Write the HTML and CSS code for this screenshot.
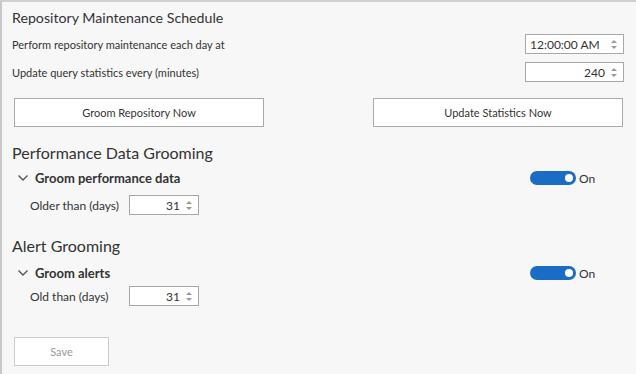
FILE: index.html
```html
<!DOCTYPE html>
<html lang="en">
<head>
    <meta charset="UTF-8">
    <title>Repository Maintenance</title>
    <link rel="stylesheet" href="styles.css">
</head>
<body>
    <div class="panel">
        <h2 class="section-title first">Repository Maintenance Schedule</h2>

        <div class="field-row">
            <span class="field-label">Perform repository maintenance each day at</span>
            <div class="spin-box wide">
                <span class="spin-value left">12:00:00 AM</span>
                <span class="spin-arrows"><i class="up"></i><i class="down"></i></span>
            </div>
        </div>
        <div class="field-row">
            <span class="field-label">Update query statistics every (minutes)</span>
            <div class="spin-box wide">
                <span class="spin-value">240</span>
                <span class="spin-arrows"><i class="up"></i><i class="down"></i></span>
            </div>
        </div>

        <div class="button-row">
            <button class="action-button">Groom Repository Now</button>
            <button class="action-button">Update Statistics Now</button>
        </div>

        <h2 class="section-title">Performance Data Grooming</h2>
        <div class="group-row">
            <span class="chevron">
                <svg width="10" height="6" viewBox="0 0 10 6"><path d="M0.5 0.5 L5 5 L9.5 0.5" fill="none" stroke="#555" stroke-width="1.4"/></svg>
            </span>
            <span class="group-label">Groom performance data</span>
            <div class="toggle-wrap">
                <span class="toggle"><span class="knob"></span></span>
                <span class="toggle-text">On</span>
            </div>
        </div>
        <div class="sub-row">
            <span class="sub-label">Older than (days)</span>
            <div class="spin-box small">
                <span class="spin-value">31</span>
                <span class="spin-arrows"><i class="up"></i><i class="down"></i></span>
            </div>
        </div>

        <h2 class="section-title">Alert Grooming</h2>
        <div class="group-row alerts">
            <span class="chevron">
                <svg width="10" height="6" viewBox="0 0 10 6"><path d="M0.5 0.5 L5 5 L9.5 0.5" fill="none" stroke="#555" stroke-width="1.4"/></svg>
            </span>
            <span class="group-label">Groom alerts</span>
            <div class="toggle-wrap">
                <span class="toggle"><span class="knob"></span></span>
                <span class="toggle-text">On</span>
            </div>
        </div>
        <div class="sub-row alerts">
            <span class="sub-label">Old than (days)</span>
            <div class="spin-box small">
                <span class="spin-value">31</span>
                <span class="spin-arrows"><i class="up"></i><i class="down"></i></span>
            </div>
        </div>

        <div class="save-row">
            <button class="save-button" disabled>Save</button>
        </div>
    </div>
</body>
</html>
```

FILE: styles.css
```css
html, body {
    margin: 0;
    height: 100%;
}
body {
    font-family: Lato, "Liberation Sans", Arial, sans-serif;
    font-size: 11px;
    color: #333;
    background: #f7f7f7;
}
.panel {
    box-sizing: border-box;
    height: 100%;
    border-left: 2px solid #c8c8c8;
    border-top: 2px solid #d0d0d0;
    padding: 0 12px 0 10px;
}
.section-title {
    margin: 0;
    font-size: 16px;
    font-weight: normal;
    color: #333;
    height: 22px;
    line-height: 22px;
}
.section-title.first {
    font-size: 14.2px;
    margin-top: 5px;
    margin-bottom: 5px;
}
.field-row {
    display: flex;
    justify-content: space-between;
    align-items: center;
    height: 20px;
    margin-bottom: 8px;
}
.spin-box {
    box-sizing: border-box;
    display: flex;
    align-items: center;
    height: 20px;
    background: #fff;
    border: 1px solid #a8a8a8;
}
.spin-box.wide {
    width: 99px;
}
.spin-box.small {
    width: 70px;
}
.spin-value {
    flex: 1;
    text-align: right;
    padding: 0 4px;
    font-size: 12px;
}
.spin-value.left {
    text-align: left;
}
.spin-arrows {
    display: flex;
    flex-direction: column;
    gap: 3px;
    width: 10px;
    margin-right: 4px;
    align-items: center;
}
.spin-arrows i {
    width: 0;
    height: 0;
    border-left: 3px solid transparent;
    border-right: 3px solid transparent;
}
.spin-arrows .up {
    border-bottom: 3px solid #999;
}
.spin-arrows .down {
    border-top: 3px solid #999;
}
.button-row {
    display: flex;
    justify-content: space-between;
    margin: 16px 1px 0 2px;
}
.action-button, .save-button {
    box-sizing: border-box;
    height: 29px;
    background: #fff;
    border: 1px solid #aaa;
    font-family: inherit;
    font-size: 11px;
    color: #333;
}
.action-button {
    width: 250px;
}
.button-row + .section-title {
    margin-top: 15px;
}
.group-row {
    display: flex;
    align-items: center;
    height: 20px;
    margin-top: 4px;
}
.group-row.alerts {
    margin-top: 6px;
}
.chevron {
    display: flex;
    width: 10px;
    margin-left: 6px;
    margin-right: 7px;
}
.group-label {
    flex: 1;
    font-weight: bold;
    font-size: 13px;
}
.toggle-wrap {
    display: flex;
    align-items: center;
    width: 94px;
}
.toggle {
    position: relative;
    width: 46px;
    height: 14px;
    border-radius: 7px;
    background: #1a6cc4;
}
.knob {
    position: absolute;
    right: 3px;
    top: 3px;
    width: 8px;
    height: 8px;
    border-radius: 50%;
    background: #fff;
}
.toggle-text {
    margin-left: 3px;
    font-size: 12px;
}
.sub-row {
    display: flex;
    align-items: center;
    height: 20px;
    margin-top: 7px;
    padding-left: 18px;
}
.sub-row.alerts {
    margin-top: 3px;
}
.sub-label {
    width: 99px;
    font-size: 12px;
}
.sub-row + .section-title {
    margin-top: 20px;
}
.save-row {
    margin: 31px 0 0 2px;
}
.save-button {
    width: 95px;
    border-color: #ccc;
    color: #999;
}
```
